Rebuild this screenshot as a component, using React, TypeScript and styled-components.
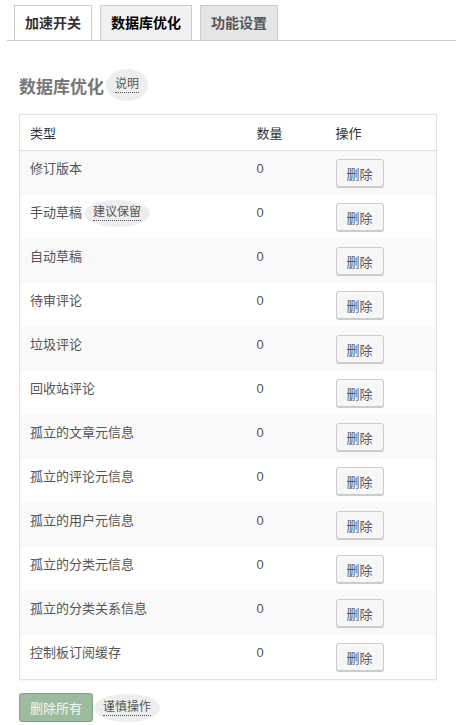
import styled, { createGlobalStyle } from "styled-components";

const GlobalStyle = createGlobalStyle`
  html, body {
    margin: 0;
    padding: 0;
    background: #fff;
  }
  body {
    font-family: "Liberation Sans", "Noto Sans CJK SC", sans-serif;
    font-size: 13px;
    color: #555;
  }
`;

const rows = [
  { name: "修订版本", count: 0 },
  { name: "手动草稿", count: 0, note: "建议保留" },
  { name: "自动草稿", count: 0 },
  { name: "待审评论", count: 0 },
  { name: "垃圾评论", count: 0 },
  { name: "回收站评论", count: 0 },
  { name: "孤立的文章元信息", count: 0 },
  { name: "孤立的评论元信息", count: 0 },
  { name: "孤立的用户元信息", count: 0 },
  { name: "孤立的分类元信息", count: 0 },
  { name: "孤立的分类关系信息", count: 0 },
  { name: "控制板订阅缓存", count: 0 },
];

const tabs = [
  { label: "加速开关", kind: "normal" },
  { label: "数据库优化", kind: "active" },
  { label: "功能设置", kind: "muted" },
] as const;

export default function App() {
  return (
    <Page>
      <GlobalStyle />
      <TabBar>
        {tabs.map((t) => (
          <Tab key={t.label} $kind={t.kind}>
            {t.label}
          </Tab>
        ))}
      </TabBar>
      <Content>
        <TitleRow>
          <Title>数据库优化</Title>
          <Pill $h={32}>
            <Dotted>说明</Dotted>
          </Pill>
        </TitleRow>
        <Table>
          <colgroup>
            <col style={{ width: 227 }} />
            <col style={{ width: 79 }} />
            <col />
          </colgroup>
          <thead>
            <tr>
              <Th>类型</Th>
              <Th>数量</Th>
              <Th>操作</Th>
            </tr>
          </thead>
          <tbody>
            {rows.map((r) => (
              <Tr key={r.name}>
                <Td>
                  <NameLine>
                    {r.name}
                    {r.note && (
                      <Pill $h={27}>
                        <Dotted>{r.note}</Dotted>
                      </Pill>
                    )}
                  </NameLine>
                </Td>
                <Td>{r.count}</Td>
                <Td>
                  <DeleteButton>删除</DeleteButton>
                </Td>
              </Tr>
            ))}
          </tbody>
        </Table>
        <Footer>
          <DeleteAll>删除所有</DeleteAll>
          <Pill $h={28}>
            <Dotted>谨慎操作</Dotted>
          </Pill>
        </Footer>
      </Content>
    </Page>
  );
}

const Page = styled.div`
  padding-top: 5px;
`;

const TabBar = styled.div`
  display: flex;
  gap: 8px;
  margin-left: 7px;
  padding-left: 7px;
  border-bottom: 1px solid #ccc;
`;

const Tab = styled.div<{ $kind: "normal" | "active" | "muted" }>`
  height: 34px;
  line-height: 34px;
  padding: 0 10px;
  border: 1px solid #ccc;
  border-bottom: 0;
  font-size: 14px;
  font-weight: bold;
  background: ${(p) =>
    p.$kind === "active" ? "#f1f1f1" : p.$kind === "muted" ? "#e5e5e5" : "#fff"};
  color: ${(p) =>
    p.$kind === "active" ? "#000" : p.$kind === "muted" ? "#555" : "#333"};
`;

const Content = styled.div`
  padding: 0 19px;
`;

const TitleRow = styled.div`
  display: flex;
  align-items: center;
  margin-top: 28px;
  margin-bottom: 13px;
`;

const Title = styled.h2`
  margin: 0 2px 0 0;
  font-size: 17px;
  font-weight: bold;
  color: #777;
`;

const Pill = styled.span<{ $h: number }>`
  display: inline-flex;
  align-items: center;
  height: ${(p) => p.$h}px;
  padding: 0 9px;
  border-radius: 50%;
  background: #eee;
  font-size: 12px;
  color: #555;
  flex-shrink: 0;
`;

const Dotted = styled.span`
  line-height: 15px;
  border-bottom: 1px dotted #555;
`;

const Table = styled.table`
  width: 418px;
  border-collapse: collapse;
  table-layout: fixed;
  border: 1px solid #e1e1e1;
  box-shadow: 0 1px 1px rgba(0, 0, 0, 0.04);
`;

const Th = styled.th`
  height: 35px;
  padding: 0 10px;
  text-align: left;
  font-weight: normal;
  font-size: 13px;
  color: #333;
  border-bottom: 1px solid #e1e1e1;
`;

const Tr = styled.tr`
  &:nth-child(odd) {
    background: #f9f9f9;
  }
`;

const Td = styled.td`
  height: 28px;
  padding: 8px 10px;
  vertical-align: top;
  line-height: 20px;
  color: #555;
`;

const NameLine = styled.div`
  display: flex;
  align-items: center;
  gap: 2px;
  height: 20px;
`;

const DeleteButton = styled.button`
  height: 28px;
  padding: 0 10px;
  font-family: inherit;
  font-size: 13px;
  color: #555;
  background: #f7f7f7;
  border: 1px solid #ccc;
  border-radius: 3px;
  box-shadow: 0 1px 0 #ccc;
  cursor: pointer;
`;

const Footer = styled.div`
  display: flex;
  align-items: center;
  gap: 1px;
  margin-top: 13px;
`;

const DeleteAll = styled.button`
  height: 29px;
  padding: 0 10px;
  font-family: inherit;
  font-size: 13px;
  color: #f4f8f4;
  background: #9dbb9d;
  border: 1px solid #7fa07f;
  border-radius: 3px;
  cursor: pointer;
`;
